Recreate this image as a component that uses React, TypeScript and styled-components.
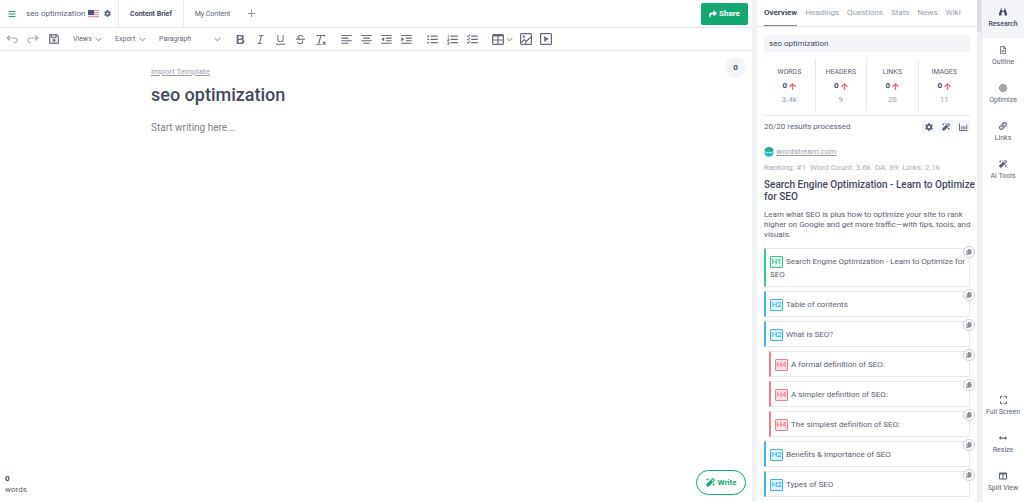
import React from "react";
import styled, { createGlobalStyle } from "styled-components";
import {
  FaArrowsAltH, FaBars, FaBinoculars, FaCog, FaColumns, FaCopy, FaLink,
  FaMagic, FaRegFileAlt, FaShare,
} from "react-icons/fa";

const c = {
  ink: "#3f4860",
  text: "#5a6174",
  muted: "#9a9fac",
  line: "#e6e8ec",
  tint: "#f3f5f9",
  green: "#13a772",
};

const Global = createGlobalStyle`
  *, *::before, *::after { box-sizing: border-box; }
  body { margin: 0; background: #fff; color: ${c.text}; font: 8px/12px Roboto, "Liberation Sans", sans-serif; }
  button, input, select { font: inherit; color: inherit; background: none; border: 0; padding: 0; margin: 0; }
  h1, h2, p, ul { margin: 0; padding: 0; }
  ul { list-style: none; }
  svg { display: block; flex: none; }
`;

const Page = styled.div`
  display: flex;
  height: 100vh;
  overflow: hidden;
`;

/* Editor */
const Editor = styled.main`
  flex: 1;
  min-width: 0;
  display: flex;
  flex-direction: column;
`;
const TopBar = styled.header`
  display: flex;
  align-items: center;
  height: 28px;
  flex: none;
  border-bottom: 1px solid ${c.line};
  padding-right: 4px;
`;
const DocName = styled.div`
  display: flex;
  align-items: center;
  align-self: stretch;
  width: 119px;
  padding-left: 8px;
  border-right: 1px solid ${c.line};
`;
const DocTitle = styled.span`
  margin: 0 3px 0 10px;
  white-space: nowrap;
`;
const IconButton = styled.button`
  display: inline-flex;
  align-items: center;
  justify-content: center;
  color: ${(p) => p.color || "inherit"};
`;
const SettingsButton = styled(IconButton)`
  margin-left: 5px;
`;
const DocTab = styled.button<{ $active?: boolean }>`
  align-self: stretch;
  width: ${(p) => (p.$active ? 65 : 57)}px;
  color: ${(p) => (p.$active ? c.ink : c.text)};
  font-size: 7px;
  font-weight: ${(p) => (p.$active ? 700 : 400)};
  border-right: ${(p) => (p.$active ? `1px solid ${c.line}` : "0")};
`;
const Share = styled.button`
  display: flex;
  align-items: center;
  justify-content: center;
  gap: 2px;
  width: 47px;
  height: 22px;
  margin-left: auto;
  border-radius: 2px;
  background: ${c.green};
  color: #fff;
  font-weight: 700;
`;
const Toolbar = styled.div`
  display: flex;
  align-items: center;
  height: 23px;
  flex: none;
  padding-left: 2px;
  border-bottom: 1px solid ${c.line};
  color: #636a7b;
`;
const Group = styled.div<{ $before?: number; $gap?: number }>`
  display: flex;
  gap: ${(p) => p.$gap || 0}px;
  margin-left: ${(p) => p.$before || 0}px;
`;
const Tool = styled(IconButton)<{ $wide?: boolean }>`
  width: ${(p) => (p.$wide ? 28 : 20)}px;
  height: 20px;
  gap: 2px;
`;
const MenuButton = styled.button<{ $width: number }>`
  display: flex;
  align-items: center;
  justify-content: space-between;
  width: ${(p) => p.$width}px;
  font-size: 7px;
`;
const SelectWrap = styled.label`
  display: grid;
  align-items: center;
  width: 62px;
  & > * { grid-area: 1 / 1; }
  & > svg { justify-self: end; pointer-events: none; }
`;
const Select = styled.select`
  appearance: none;
  width: 100%;
  font-size: 7px;
`;
const Canvas = styled.section`
  flex: 1;
  position: relative;
  padding: 14px 150px 0 151px;
`;
const Template = styled.a`
  display: block;
  color: ${c.muted};
  line-height: 14px;
`;
const Heading = styled.h1`
  margin-top: 4px;
  color: ${c.ink};
  font-size: 18px;
  line-height: 24px;
  font-weight: 500;
`;
const Draft = styled.input`
  display: block;
  width: 100%;
  margin-top: 13px;
  font-size: 10px;
  line-height: 16px;
  &::placeholder { color: #7d8189; opacity: 1; }
`;
const Score = styled.div`
  position: absolute;
  top: 6px;
  right: 6px;
  width: 21px;
  height: 21px;
  border-radius: 50%;
  background: ${c.tint};
  color: ${c.ink};
  font-weight: 700;
  line-height: 21px;
  text-align: center;
`;
const Footer = styled.footer`
  display: flex;
  align-items: flex-end;
  justify-content: space-between;
  padding: 0 6px 7px 5px;
`;
const WordCount = styled.div`
  line-height: 11px;
  & strong { display: block; color: ${c.ink}; }
`;
const Write = styled.button`
  display: flex;
  align-items: center;
  justify-content: center;
  gap: 3px;
  width: 50px;
  height: 25px;
  border: 1px solid ${c.green};
  border-radius: 13px;
  color: ${c.green};
  font-weight: 700;
`;

/* Research panel */
const Gutter = styled.div`
  width: 5px;
  flex: none;
  background: #f1f2f5;
`;
const Panel = styled.aside`
  width: 220px;
  flex: none;
`;
const Tabs = styled.nav`
  display: flex;
  gap: 8px;
  height: 27px;
  padding-left: 7px;
  border-bottom: 1px solid ${c.line};
`;
const Tab = styled.button<{ $active?: boolean }>`
  height: 26px;
  color: ${(p) => (p.$active ? c.ink : c.muted)};
  font-weight: ${(p) => (p.$active ? 700 : 400)};
  border-bottom: 1px solid ${(p) => (p.$active ? "#7a8090" : "transparent")};
`;
const PanelBody = styled.div`
  padding: 8px 7px 0;
`;
const Keyword = styled.input`
  display: block;
  width: 100%;
  height: 17px;
  padding: 0 5px;
  border-radius: 2px;
  background: ${c.tint};
  color: ${c.ink};
`;
const Stats = styled.div`
  display: grid;
  grid-template-columns: repeat(4, 1fr);
  padding: 7px 0 4px;
  border-bottom: 1px solid ${c.line};
`;
const Stat = styled.div`
  display: flex;
  flex-direction: column;
  align-items: center;
  height: 52px;
  padding-top: 6px;
  line-height: 14px;
  font-size: 7px;
  &:not(:last-child) { border-right: 1px solid ${c.line}; }
`;
const Count = styled.strong`
  display: flex;
  align-items: center;
  gap: 2px;
  color: ${c.ink};
  font-size: 8px;
`;
const Average = styled.span`
  color: ${c.muted};
  font-size: 8px;
`;
const Processed = styled.div`
  display: flex;
  align-items: center;
  gap: 3px;
  padding-top: 4px;
  & > span { flex: 1; }
`;
const Square = styled(IconButton)`
  width: 14px;
  height: 13px;
  border-radius: 2px;
  background: ${c.tint};
`;
const Source = styled.div`
  display: flex;
  align-items: center;
  gap: 2px;
  margin-top: 13px;
  & a { color: ${c.muted}; }
`;
const Meta = styled.div`
  display: flex;
  gap: 4px;
  margin-top: 4px;
  color: #aaaeb8;
  white-space: nowrap;
`;
const ResultTitle = styled.h2`
  margin: 5px -7px 0 0;
  color: ${c.ink};
  font-size: 10px;
  line-height: 12px;
  font-weight: 500;
`;
const Summary = styled.p`
  margin: 7px -7px 8px 0;
  line-height: 10px;
`;
const Outline = styled.ul`
  display: flex;
  flex-direction: column;
  gap: 4px;
`;
const tone = { H1: "#34c98e", H2: "#38b6f0", H4: "#f27c8b" };
const fill = { H1: "#dff7ed", H2: "#e0f4fe", H4: "#fde3e7" };
type Level = keyof typeof tone;
const Item = styled.li<{ $level: Level }>`
  position: relative;
  margin-left: ${(p) => (p.$level === "H4" ? 5 : 0)}px;
  padding: 6px 4px 5px;
  border: 1px solid ${c.line};
  border-left: 2px solid ${(p) => tone[p.$level]};
  line-height: 13px;
`;
const Badge = styled.span<{ $level: Level }>`
  display: inline-block;
  width: 13px;
  height: 12px;
  margin-right: 3px;
  border: 1px solid ${(p) => tone[p.$level]};
  border-radius: 1px;
  background: ${(p) => fill[p.$level]};
  color: ${(p) => tone[p.$level]};
  font-weight: 500;
  line-height: 10px;
  text-align: center;
`;
const Copy = styled.button`
  position: absolute;
  top: -3px;
  right: -6px;
  display: flex;
  align-items: center;
  justify-content: center;
  width: 12px;
  height: 12px;
  border: 1px solid #c9ccd2;
  border-radius: 50%;
  background: #fff;
  color: #8d919b;
`;
const Scroll = styled.div`
  width: 4px;
  flex: none;
  background: #f1f2f5;
  &::before { content: ""; display: block; height: 32px; background: #dcdde1; }
`;

/* Right-hand navigation */
const Side = styled.nav`
  display: flex;
  flex-direction: column;
  width: 43px;
  flex: none;
  border-left: 1px solid ${c.line};
`;
const SideItem = styled.button<{ $active?: boolean }>`
  display: flex;
  flex-direction: column;
  align-items: center;
  gap: 2px;
  height: 38px;
  padding-top: 8px;
  white-space: nowrap;
  font-size: 7px;
  color: ${(p) => (p.$active ? c.ink : c.text)};
  background: ${(p) => (p.$active ? c.tint : "none")};
  font-weight: ${(p) => (p.$active ? 500 : 400)};
`;
const Spacer = styled.div`
  flex: 1;
`;

const Glyph = ({ d, size = 13, flip }: { d: string; size?: number; flip?: boolean }) => (
  <svg width={size} height={size} viewBox="0 0 20 20" fill="currentColor">
    <path d={d} transform={flip ? "translate(20 0) scale(-1 1)" : undefined} />
  </svg>
);
const Chevron = () => (
  <svg width="7" height="5" viewBox="0 0 7 5" fill="none" stroke="#7c8291" strokeWidth="1">
    <path d="M.7 1l2.8 2.8L6.3 1" />
  </svg>
);
const Flag = () => (
  <svg width="11" height="8" viewBox="0 0 11 8">
    <path fill="#f6e9ea" d="M0 0h11v8H0z" />
    <path stroke="#e0999c" d="M0 .5h11M0 2.5h11M0 4.5h11M0 6.5h11" />
    <path fill="#46548a" d="M0 0h6v5H0z" />
  </svg>
);
const Up = () => (
  <svg width="7" height="7" viewBox="0 0 7 7" fill="none" stroke="#f0676d" strokeWidth="1.3">
    <path d="M3.5 7V1M.6 3.7L3.500 .9l2.900 2.800" />
  </svg>
);
const Target = () => (
  <svg width="8" height="8" viewBox="0 0 16 16" fill="none" stroke="currentColor" strokeWidth="1.8">
    <circle cx="8" cy="8" r="7" /><circle cx="8" cy="8" r="4" /><circle cx="8" cy="8" r="1" />
  </svg>
);
const FullScreen = () => (
  <svg width="7" height="8" viewBox="0 0 7 8" fill="none" stroke="currentColor">
    <path d="M.5 2.5v-2h2M4.5 .5h2v2M6.5 5.5v2h-2M2.5 7.5h-2v-2" />
  </svg>
);
const ChartIcon = () => (
  <svg width="9" height="8" viewBox="0 0 18 16" fill="none" stroke="currentColor" strokeWidth="1.8">
    <path d="M1 1v14h16M5 12.500V7M8.500 12.500V5M12 12.500V7M15.500 12.500V3" />
  </svg>
);
const SiteLogo = () => (
  <svg width="10" height="10" viewBox="0 0 10 10">
    <circle cx="5" cy="5" r="4.800" fill="#2eb0ea" />
    <path fill="#2fae83" d="M.3 4.200A4.800 4.800 0 0 1 9.700 4.200L5 6z" />
    <path fill="none" stroke="#fff" strokeWidth=".8" d="M0 4l2.500 1.800L5 5.200l2.500.6L10 4" />
  </svg>
);
const TableIcon = () => (
  <svg width="12" height="11" viewBox="0 0 12 11" fill="none" stroke="currentColor">
    <rect x=".6" y=".6" width="10.800" height="9.800" rx="1" strokeWidth="1.200" />
    <path d="M1 1.500h10" strokeWidth="2" /><path d="M1 6h10M6 2v8" strokeWidth="1.200" />
  </svg>
);
const ImageIcon = () => (
  <svg width="12" height="12" viewBox="0 0 12 12" fill="none" stroke="currentColor" strokeWidth="1.200">
    <rect x=".6" y=".6" width="10.800" height="10.800" rx="1" />
    <path d="M1.500 9.500l2.700-3 2 2 4.500-4.200M5 10.500l1.500-2" /><circle cx="4" cy="3.600" r=".6" />
  </svg>
);
const MediaIcon = () => (
  <svg width="12" height="12" viewBox="0 0 12 12" fill="none" stroke="currentColor" strokeWidth="1.200">
    <rect x=".6" y=".6" width="10.800" height="10.800" rx="1" />
    <path fill="currentColor" stroke="none" d="M4.200 3l4.500 3-4.500 3z" />
  </svg>
);
const SaveIcon = () => (
  <svg width="10" height="10" viewBox="0 0 10 10" fill="none" stroke="currentColor" strokeWidth="1.400">
    <path d="M.7 1.200q0-.5.5-.5h6.300l1.800 1.800v6.300q0 .5-.5.5H1.200q-.5 0-.5-.5z" />
    <path d="M2.500 1v2.500h4.500V1" /><circle cx="5" cy="6.400" r="1" fill="currentColor" />
  </svg>
);

const icons = {
  undo: "m5.042 9.367 2.189 1.837a.75.75 0 0 1-.965 1.149l-3.788-3.18a.747.747 0 0 1-.21-.284.75.75 0 0 1 .17-.945L6.23 4.762a.75.75 0 1 1 .964 1.15L4.863 7.866h8.917A.75.75 0 0 1 14 7.9a4 4 0 1 1-1.477 7.718l.344-1.489a2.5 2.5 0 1 0 1.094-4.73l.008-.032H5.042z",
  bold: "M10.187 17H5.773c-.637 0-1.092-.138-1.364-.415-.273-.277-.409-.718-.409-1.323V4.738c0-.617.14-1.062.419-1.332.279-.27.73-.406 1.354-.406h4.68c.69 0 1.288.041 1.793.124.506.083.96.242 1.36.478.341.197.644.447.906.75a3.262 3.262 0 0 1 .808 2.162c0 1.401-.722 2.426-2.167 3.075C15.05 10.175 16 11.315 16 13.01a3.756 3.756 0 0 1-2.296 3.504 6.1 6.1 0 0 1-1.517.377c-.571.073-1.238.11-2 .11zm-.217-6.217H7v4.087h3.069c1.977 0 2.965-.69 2.965-2.072 0-.707-.256-1.22-.768-1.537-.512-.319-1.277-.478-2.296-.478zM7 5.13v3.619h2.606c.729 0 1.292-.067 1.69-.2a1.6 1.6 0 0 0 .91-.765c.165-.267.247-.566.247-.897 0-.707-.26-1.176-.778-1.409-.519-.232-1.31-.348-2.375-.348H7z",
  italic: "m9.586 14.633.021.004c-.036.335.095.655.393.962.082.083.173.15.274.201h1.474a.6.6 0 1 1 0 1.2H5.304a.6.6 0 0 1 0-1.2h1.15c.474-.07.809-.182 1.005-.334.157-.122.291-.32.404-.597l2.416-9.55a1.053 1.053 0 0 0-.281-.823 1.12 1.12 0 0 0-.442-.296H8.15a.6.6 0 0 1 0-1.2h6.443a.6.6 0 1 1 0 1.2h-1.195c-.376.056-.65.155-.823.296-.215.175-.423.439-.623.79l-2.366 9.347z",
  underline: "M3 18v-1.5h14V18zm2.200-8V3.600c0-.4.4-.6.8-.6.3 0 .7.2.7.6v6.200c0 2 1.300 2.800 3.200 2.800 1.900 0 3.400-.9 3.400-2.900V3.600c0-.3.4-.5.8-.5.3 0 .7.2.7.5V10c0 2.700-2.200 4-4.900 4-2.600 0-4.700-1.200-4.700-4z",
  strike: "M7 16.400c-.8-.4-1.500-.9-2.200-1.500a.6.6 0 0 1-.2-.5l.3-.6h1c1 1.200 2.100 1.700 3.700 1.700 1 0 1.800-.3 2.300-.6.6-.4.6-1.200.6-1.300.2-1.200-.9-2.100-.9-2.100h2.100c.3.7.4 1.200.4 1.700v.8l-.6 1.200c-.6.8-1.100 1-1.600 1.200a6 6 0 0 1-2.400.6c-1 0-1.800-.3-2.500-.6zM6.800 9 6 8.300c-.4-.5-.5-.8-.5-1.600 0-.7.1-1.300.5-1.800.4-.6 1-1 1.600-1.300a6.300 6.300 0 0 1 4.700 0 4 4 0 0 1 1.700 1l.3.7c0 .1.2.4-.2.7-.4.2-.9.1-1 0a3 3 0 0 0-1.200-1c-.4-.2-1-.3-2-.4-.7 0-1.400.2-2 .6-.8.6-1 .8-1 1.500 0 .8.5 1 1.200 1.500.6.4 1.100.7 1.900 1H6.800zM3 10.500V9h14v1.500z",
  clear: "M8.690 14.915c.053.052.173.083.36.093a.366.366 0 0 1 .345.485l-.003.01a.738.738 0 0 1-.697.497h-2.670a.374.374 0 0 1-.353-.496l.013-.038a.681.681 0 0 1 .644-.458c.197-.012.325-.043.386-.093a.28.28 0 0 0 .072-.11L9.592 4.500H6.269c-.359-.017-.609.013-.75.09-.142.078-.289.265-.442.563-.192.29-.516.464-.864.464H4.170a.43.43 0 0 1-.407-.569L4.460 3h13.080l-.62 2.043a.81.81 0 0 1-.775.574h-.114a.486.486 0 0 1-.486-.486c.001-.284-.054-.464-.167-.54-.112-.076-.367-.106-.766-.091h-3.280l-2.680 10.257c-.006.074.007.127.038.158zM3 17h8a.5.5 0 1 1 0 1H3a.5.5 0 1 1 0-1zm11.299 1.170a.75.75 0 1 1-1.060-1.060l1.414-1.415-1.415-1.414a.75.75 0 0 1 1.060-1.060l1.415 1.414 1.414-1.415a.75.75 0 1 1 1.060 1.060l-1.413 1.415 1.414 1.415a.75.75 0 0 1-1.060 1.060l-1.415-1.414-1.414 1.414z",
  left: "M2 3h16v1.700H2zM2 7h11v1.700H2zM2 11h16v1.700H2zM2 15h11v1.700H2z",
  center: "M2 3h16v1.700H2zM5 7h10v1.700H5zM2 11h16v1.700H2zM5 15h10v1.700H5z",
  outdent: "M2 3h16v1.700H2zM9 7h9v1.700H9zM9 11h9v1.700H9zM2 15h16v1.700H2zM6.500 6.500v6.500L2 9.700z",
  indent: "M2 3h16v1.700H2zM9 7h9v1.700H9zM9 11h9v1.700H9zM2 15h16v1.700H2zM2 6.500v6.500l4.500-3.300z",
  bullets: "M7 4h11v1.700H7zM7 9h11v1.700H7zM7 14h11v1.700H7zM2 3.700h2.600v2.300H2zM2 8.700h2.600V11H2zM2 13.700h2.600V16H2z",
  numbers: "M7 4h11v1.700H7zM7 9h11v1.700H7zM7 14h11v1.700H7zM2.500 2.500h1.600v4H3v-3h-.5zM2 8h3v2l-1.500 1.300H5v1H2v-1L4 9.300V9H2zM2 13.500h3V18H2v-1h1.900v-.8H2.500v-.9h1.400v-.8H2z",
  checks: "M8 4h10v1.700H8zM8 9h10v1.700H8zM8 14h10v1.700H8zM1 4.700l1-1 1.200 1.200L6 2l1 1-3.800 4zM1 9.700l1-1 1.200 1.200L6 7l1 1-3.800 4zM1 14.700l1-1 1.200 1.200L6 12l1 1-3.800 4z",
};

const styles: [string, string][] = [
  ["Bold", icons.bold], ["Italic", icons.italic], ["Underline", icons.underline],
  ["Strikethrough", icons.strike], ["Remove format", icons.clear],
];
const aligns: [string, string][] = [
  ["Align left", icons.left], ["Align center", icons.center],
  ["Decrease indent", icons.outdent], ["Increase indent", icons.indent],
];
const lists: [string, string][] = [
  ["Bulleted list", icons.bullets], ["Numbered list", icons.numbers], ["To-do list", icons.checks],
];
const stats = [["WORDS", "3.4k"], ["HEADERS", "9"], ["LINKS", "20"], ["IMAGES", "11"]];
const outline: [Level, string][] = [
  ["H1", "Search Engine Optimization - Learn to Optimize for SEO"],
  ["H2", "Table of contents"],
  ["H2", "What is SEO?"],
  ["H4", "A formal definition of SEO:"],
  ["H4", "A simpler definition of SEO:"],
  ["H4", "The simplest definition of SEO:"],
  ["H2", "Benefits & importance of SEO"],
  ["H2", "Types of SEO"],
];

const Tools = ({ items }: { items: [string, string][] }) => (
  <>{items.map(([name, d]) => <Tool key={name} aria-label={name}><Glyph d={d} /></Tool>)}</>
);

export default function App() {
  return (
    <Page>
      <Global />
      <Editor>
        <TopBar>
          <DocName>
            <IconButton aria-label="Menu" color={c.green}><FaBars size={8} /></IconButton>
            <DocTitle>seo optimization</DocTitle>
            <Flag />
            <SettingsButton aria-label="Settings"><FaCog size={7} /></SettingsButton>
          </DocName>
          <DocTab $active>Content Brief</DocTab>
          <DocTab>My Content</DocTab>
          <Tool aria-label="Add tab">
            <svg width="7" height="7" viewBox="0 0 7 7" stroke="#8d93a0"><path d="M3.500 0v7M0 3.500h7" /></svg>
          </Tool>
          <Share><FaShare size={8} />Share</Share>
        </TopBar>
        <Toolbar>
          <Group $gap={1}>
            <Tool aria-label="Undo" color="#a5a9b3"><Glyph d={icons.undo} size={14} /></Tool>
            <Tool aria-label="Redo" color="#a5a9b3"><Glyph d={icons.undo} size={14} flip /></Tool>
            <Tool aria-label="Save" color="#7c8291"><SaveIcon /></Tool>
          </Group>
          <Group $before={9} $gap={13}>
            <MenuButton $width={29}>Views<Chevron /></MenuButton>
            <MenuButton $width={31}>Export<Chevron /></MenuButton>
            <SelectWrap>
              <Select aria-label="Text style" defaultValue="Paragraph"><option>Paragraph</option></Select>
              <Chevron />
            </SelectWrap>
          </Group>
          <Group $before={9}><Tools items={styles} /></Group>
          <Group $before={6}><Tools items={aligns} /></Group>
          <Group $before={6}><Tools items={lists} /></Group>
          <Group $before={6}>
            <Tool $wide aria-label="Table"><TableIcon /><Chevron /></Tool>
            <Tool aria-label="Image"><ImageIcon /></Tool>
            <Tool aria-label="Media"><MediaIcon /></Tool>
          </Group>
        </Toolbar>
        <Canvas>
          <Template href="#">Import Template</Template>
          <Heading>seo optimization</Heading>
          <Draft aria-label="Document text" placeholder="Start writing here..." />
          <Score>0</Score>
        </Canvas>
        <Footer>
          <WordCount><strong>0</strong>words</WordCount>
          <Write><FaMagic size={9} />Write</Write>
        </Footer>
      </Editor>
      <Gutter />
      <Panel>
        <Tabs>
          {["Overview", "Headings", "Questions", "Stats", "News", "Wiki"].map((t, i) => (
            <Tab key={t} $active={i === 0}>{t}</Tab>
          ))}
        </Tabs>
        <PanelBody>
          <Keyword aria-label="Keyword" defaultValue="seo optimization" />
          <Stats>
            {stats.map(([name, avg]) => (
              <Stat key={name}>{name}<Count>0<Up /></Count><Average>{avg}</Average></Stat>
            ))}
          </Stats>
          <Processed>
            <span>20/20 results processed</span>
            <Square aria-label="Settings"><FaCog size={8} /></Square>
            <Square aria-label="Generate"><FaMagic size={8} /></Square>
            <Square aria-label="Chart"><ChartIcon /></Square>
          </Processed>
          <Source><SiteLogo /><a href="#">wordstream.com</a></Source>
          <Meta>
            <span>Ranking: #1</span><span>Word Count: 3.6k</span><span>DA: 89</span><span>Links: 2.1k</span>
          </Meta>
          <ResultTitle>Search Engine Optimization - Learn to Optimize for SEO</ResultTitle>
          <Summary>
            Learn what SEO is plus how to optimize your site to rank higher on Google and get more
            traffic—with tips, tools, and visuals.
          </Summary>
          <Outline>
            {outline.map(([level, text]) => (
              <Item key={text} $level={level}>
                <Badge $level={level}>{level}</Badge>{text}
                <Copy aria-label="Copy heading"><FaCopy size={6} /></Copy>
              </Item>
            ))}
          </Outline>
        </PanelBody>
      </Panel>
      <Scroll />
      <Side>
        <SideItem $active><FaBinoculars size={8} />Research</SideItem>
        <SideItem><FaRegFileAlt size={8} />Outline</SideItem>
        <SideItem><Target />Optimize</SideItem>
        <SideItem><FaLink size={8} />Links</SideItem>
        <SideItem><FaMagic size={8} />AI Tools</SideItem>
        <Spacer />
        <SideItem><FullScreen />Full Screen</SideItem>
        <SideItem><FaArrowsAltH size={8} />Resize</SideItem>
        <SideItem><FaColumns size={8} />Split View</SideItem>
      </Side>
    </Page>
  );
}
